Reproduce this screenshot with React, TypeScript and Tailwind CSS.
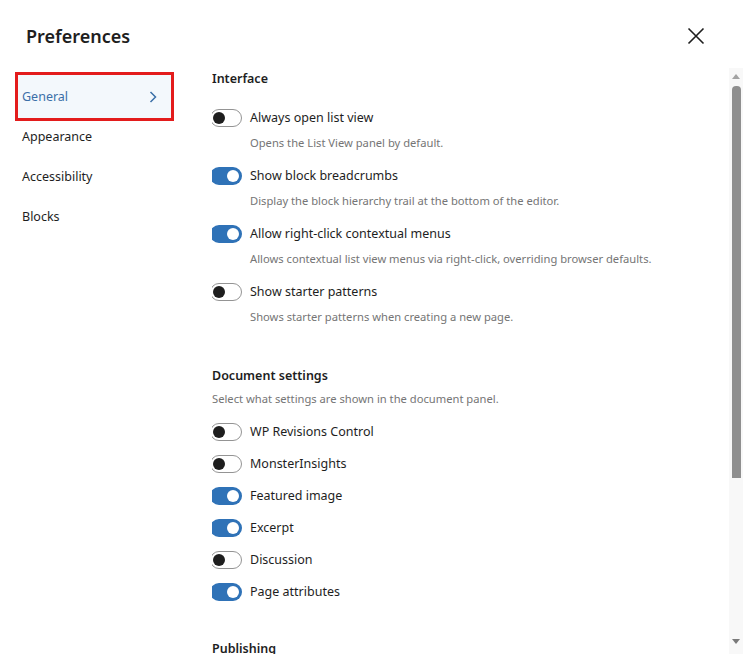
import { useState } from 'react';

const interfaceOptions = [
  { label: 'Always open list view', help: 'Opens the List View panel by default.', on: false },
  { label: 'Show block breadcrumbs', help: 'Display the block hierarchy trail at the bottom of the editor.', on: true },
  {
    label: 'Allow right-click contextual menus',
    help: 'Allows contextual list view menus via right-click, overriding browser defaults.',
    on: true,
  },
  { label: 'Show starter patterns', help: 'Shows starter patterns when creating a new page.', on: false },
];

const documentOptions = [
  { label: 'WP Revisions Control', on: false },
  { label: 'MonsterInsights', on: false },
  { label: 'Featured image', on: true },
  { label: 'Excerpt', on: true },
  { label: 'Discussion', on: false },
  { label: 'Page attributes', on: true },
];

const tabs = ['General', 'Appearance', 'Accessibility', 'Blocks'];

function Toggle({ on }: { on: boolean }) {
  return on ? (
    <span className="flex h-[18px] w-[32px] flex-shrink-0 items-center justify-end rounded-full bg-[#2f72b7] pr-[3px]">
      <span className="h-[12px] w-[12px] rounded-full bg-white" />
    </span>
  ) : (
    <span className="flex h-[18px] w-[32px] flex-shrink-0 items-center rounded-full border border-[#949494] bg-white pl-[2px]">
      <span className="h-[12px] w-[12px] rounded-full bg-[#1e1e1e]" />
    </span>
  );
}

export default function App() {
  const [active] = useState('General');

  return (
    <div className="flex h-[654px] w-[743px] flex-col overflow-hidden bg-white font-['Noto_Sans',sans-serif] text-[#1e1e1e]">
      {/* Header */}
      <div className="flex h-[68px] flex-shrink-0 items-start justify-between pl-[26px] pr-[38px] pt-[22px]">
        <h1 className="text-[18px] font-semibold leading-[28px]">Preferences</h1>
        <button className="mt-[5px] text-[#1e1e1e]">
          <svg width="18" height="18" viewBox="0 0 18 18" fill="none" stroke="currentColor" strokeWidth="1.6">
            <path d="M1.5 1.5l15 15M16.5 1.5l-15 15" />
          </svg>
        </button>
      </div>

      <div className="flex min-h-0 flex-1">
        {/* Sidebar */}
        <nav className="w-[212px] flex-shrink-0 pl-[15px] pt-[4px]">
          {tabs.map((tab) =>
            tab === active ? (
              <div key={tab} className="-mb-[4px] h-[49px] w-[159px] border-[3px] border-[#e31c1c] bg-[#f3f8fc]">
                <div className="flex h-full items-center justify-between pl-[4px] pr-[14px] pt-[1px] text-[12.5px] text-[#3b6fa8]">
                  <span>{tab}</span>
                  <svg width="8" height="12" viewBox="0 0 8 12" fill="none" stroke="currentColor" strokeWidth="1.5">
                    <path d="M1.5 1l5 5-5 5" />
                  </svg>
                </div>
              </div>
            ) : (
              <div key={tab} className="flex h-[40px] items-center pl-[7px] text-[12.5px]">
                {tab}
              </div>
            ),
          )}
        </nav>

        {/* Content */}
        <div className="min-w-0 flex-1 overflow-hidden pt-[1px]">
          <section>
            <h2 className="text-[12.5px] font-semibold leading-[20px]">Interface</h2>
            <div className="mt-[19px] flex flex-col gap-[14px]">
              {interfaceOptions.map((o) => (
                <div key={o.label} className="-ml-[2px]">
                  <div className="flex items-center gap-[8px]">
                    <Toggle on={o.on} />
                    <span className="text-[12.5px] leading-[20px]">{o.label}</span>
                  </div>
                  <p className="ml-[40px] mt-[6px] text-[11.2px] leading-[18px] text-[#757575]">{o.help}</p>
                </div>
              ))}
            </div>
          </section>

          <section className="mt-[40px]">
            <h2 className="text-[12.5px] font-semibold leading-[20px]">Document settings</h2>
            <p className="mt-[4px] text-[11.2px] leading-[18px] text-[#757575]">
              Select what settings are shown in the document panel.
            </p>
            <div className="mt-[14px] flex flex-col gap-[12px]">
              {documentOptions.map((o) => (
                <div key={o.label} className="-ml-[2px] flex items-center gap-[8px]">
                  <Toggle on={o.on} />
                  <span className="text-[12.5px] leading-[20px]">{o.label}</span>
                </div>
              ))}
            </div>
          </section>

          <section className="mt-[37px]">
            <h2 className="text-[12.5px] font-semibold leading-[20px]">Publishing</h2>
          </section>
        </div>

        {/* Scrollbar */}
        <div className="flex w-[14px] flex-shrink-0 flex-col items-center bg-[#f8f8f8]">
          <div className="flex h-[16px] items-center justify-center">
            <span className="h-0 w-0 border-x-[4px] border-b-[5px] border-x-transparent border-b-[#a3a3a3]" />
          </div>
          <div className="mt-[2px] h-[392px] w-[9px] rounded-t-[4px] bg-[#8f8f8f]" />
          <div className="flex-1" />
          <div className="mb-[5px] flex h-[16px] items-center justify-center">
            <span className="h-0 w-0 border-x-[4px] border-t-[5px] border-x-transparent border-t-[#7a7a7a]" />
          </div>
        </div>
      </div>
    </div>
  );
}
